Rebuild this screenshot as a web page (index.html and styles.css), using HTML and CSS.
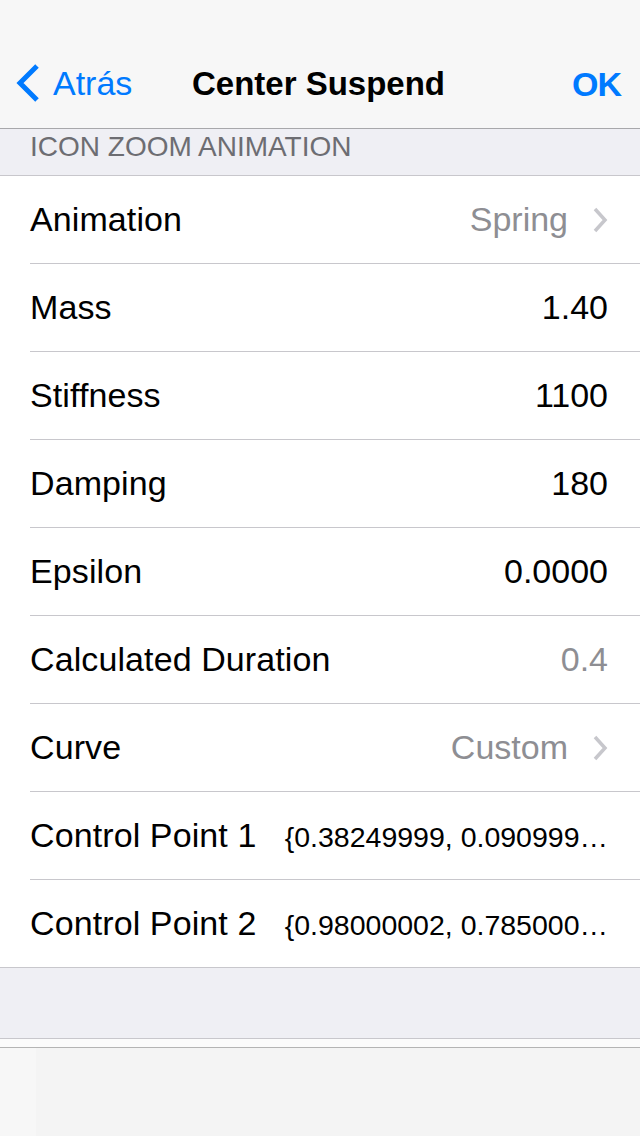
FILE: index.html
```html
<!DOCTYPE html>
<html>
<head>
<meta charset="utf-8">
<link rel="stylesheet" href="styles.css">
</head>
<body>
<div class="screen">
  <header class="navbar">
    <div class="status"></div>
    <div class="nav-row">
      <a class="nav-back">
        <svg class="back-chev" width="26" height="40" viewBox="0 0 26 40"><path d="M22 3 L5 20 L22 37" fill="none" stroke="#007aff" stroke-width="5"/></svg>
        <span>Atrás</span>
      </a>
      <div class="nav-title">Center Suspend</div>
      <a class="nav-ok">OK</a>
    </div>
  </header>
  <div class="section-header">ICON ZOOM ANIMATION</div>
  <ul class="table">
    <li class="row"><span class="label">Animation</span><span class="value muted">Spring</span><svg class="chev" width="16" height="26" viewBox="0 0 16 26"><path d="M3 2 L13 13 L3 24" fill="none" stroke="#c7c7cc" stroke-width="3.5"/></svg></li>
    <li class="row"><span class="label">Mass</span><span class="value">1.40</span></li>
    <li class="row"><span class="label">Stiffness</span><span class="value">1100</span></li>
    <li class="row"><span class="label">Damping</span><span class="value">180</span></li>
    <li class="row"><span class="label">Epsilon</span><span class="value">0.0000</span></li>
    <li class="row"><span class="label">Calculated Duration</span><span class="value muted">0.4</span></li>
    <li class="row"><span class="label">Curve</span><span class="value muted">Custom</span><svg class="chev" width="16" height="26" viewBox="0 0 16 26"><path d="M3 2 L13 13 L3 24" fill="none" stroke="#c7c7cc" stroke-width="3.5"/></svg></li>
    <li class="row"><span class="label">Control Point 1</span><span class="value small">{0.38249999, 0.090999…</span></li>
    <li class="row last"><span class="label">Control Point 2</span><span class="value small">{0.98000002, 0.785000…</span></li>
  </ul>
  <div class="footer-gap"></div>
  <div class="footer-strip"></div>
  <footer class="toolbar"><div class="tb-left"></div><div class="tb-main"></div></footer>
</div>
</body>
</html>
```
FILE: styles.css
```css
* { box-sizing: border-box; }
html, body { margin: 0; padding: 0; }
body {
  font-family: "Liberation Sans", Arial, sans-serif;
  background: #efeff4;
  color: #000;
}
.screen {
  width: 640px;
  height: 1136px;
  display: flex;
  flex-direction: column;
  overflow: hidden;
}
.navbar {
  height: 129px;
  background: #f7f7f7;
  border-bottom: 1px solid #a8a8ab;
  display: flex;
  flex-direction: column;
}
.status { height: 40px; }
.nav-row {
  height: 88px;
  display: grid;
  grid-template-columns: 1fr auto 1fr;
  align-items: center;
  padding: 0 18px 0 15px;
}
.nav-back {
  justify-self: start;
  display: flex;
  align-items: center;
  gap: 12px;
  color: #007aff;
  font-size: 34px;
  margin-top: -2px;
}
.back-chev { display: block; }
.nav-title {
  font-size: 33px;
  font-weight: bold;
  letter-spacing: 0px;
  text-align: center;
  margin-left: 0;
}
.nav-ok {
  justify-self: end;
  color: #007aff;
  font-size: 34px;
  font-weight: bold;
  letter-spacing: -1px;
  margin-right: 1px;
}
.section-header {
  height: 47px;
  border-bottom: 1px solid #c8c7cc;
  color: #6d6d72;
  font-size: 28px;
  padding: 0 30px;
  display: flex;
  align-items: center;
  padding-bottom: 10px;
}
.table {
  list-style: none;
  margin: 0;
  padding: 0 0 0 30px;
  background: #fff;
  border-bottom: 1px solid #c8c7cc;
}
.row {
  height: 88px;
  display: flex;
  align-items: center;
  padding-right: 32px;
  border-bottom: 1px solid #c8c7cc;
  font-size: 34px;
  white-space: nowrap;
}
.row.last { border-bottom: none; height: 87px; }
.label { flex: none; letter-spacing: 0.1px; }
.value {
  flex: 1;
  text-align: right;
  min-width: 0;
}
.value.muted { color: #8e8e93; }
.value.small { font-size: 28.5px; padding-left: 20px; margin-top: 4px; }
.chev { flex: none; margin-left: 24px; display: block; }
.footer-gap { height: 71px; border-bottom: 1px solid #c8c7cc; flex: none; }
.footer-strip { height: 9px; background: #fbfbfb; border-bottom: 1px solid #b4b4b4; flex: none; }
.toolbar {
  flex: 1;
  display: flex;
  background: #f4f4f4;
}
.tb-left { width: 36px; background: #f7f7f7; }
.tb-main { flex: 1; }
```
